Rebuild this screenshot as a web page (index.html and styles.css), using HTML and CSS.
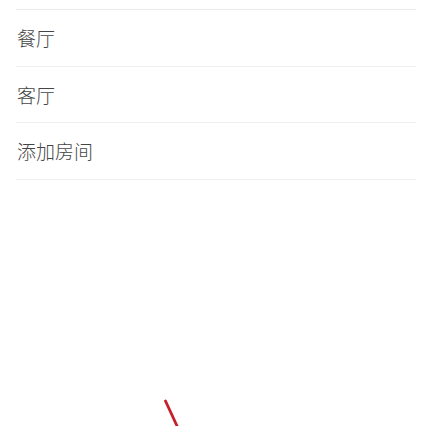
FILE: index.html
```html
<!DOCTYPE html>
<html lang="zh-CN">
<head>
<meta charset="utf-8">
<link rel="stylesheet" href="styles.css">
</head>
<body>
<div class="list">
  <div class="spacer"></div>
  <div class="row">餐厅</div>
  <div class="row">客厅</div>
  <div class="row">添加房间</div>
</div>
<svg class="slash" width="20" height="30" viewBox="0 0 20 30">
  <line x1="3.5" y1="4" x2="15.5" y2="30" stroke="#c41f2a" stroke-width="2.8" stroke-linecap="round"/>
</svg>
</body>
</html>
```
FILE: styles.css
```css
html, body {
  margin: 0;
  padding: 0;
  background: #ffffff;
  width: 424px;
  height: 426px;
  overflow: hidden;
  position: relative;
}
.list {
  margin: 0 8px 0 16px;
}
.spacer {
  height: 9px;
  border-bottom: 1px solid #ececec;
}
.row {
  height: 55.5px;
  display: flex;
  align-items: center;
  padding-left: 1px;
  border-bottom: 1px solid #f0f0f0;
  font-family: "Noto Sans CJK SC", "Noto Sans", sans-serif;
  font-size: 19px;
  font-weight: 300;
  color: #454545;
}
.slash {
  position: absolute;
  left: 162px;
  top: 397px;
}
```
